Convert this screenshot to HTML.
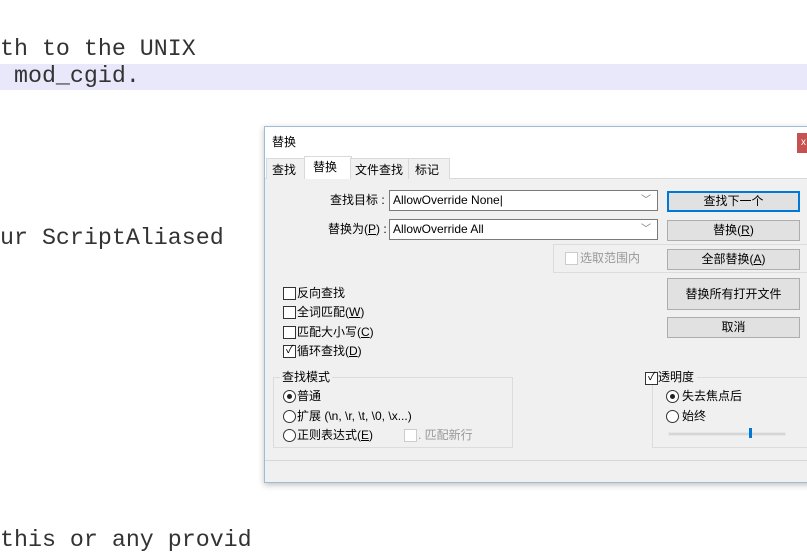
<!DOCTYPE html>
<html><head><meta charset="utf-8"><style>
body{margin:0;width:807px;height:533px;overflow:hidden;background:#fff;position:relative;font-family:"Liberation Sans","Noto Sans CJK SC",sans-serif}
.code{position:absolute;left:0;font-family:"Liberation Mono",monospace;font-size:23.3px;color:#333;white-space:pre;line-height:27px}
.a{position:absolute}
.t{position:absolute;font-size:12px;color:#000;white-space:nowrap;line-height:16px}
.btn{position:absolute;left:667px;width:131px;height:19px;background:#e1e1e1;border:1px solid #adadad;font-size:12px;text-align:center;line-height:19px}
.cb{position:absolute;width:11px;height:11px;border:1px solid #333;background:#fff}
.rb{position:absolute;width:11px;height:11px;border:1px solid #333;border-radius:50%;background:#fff}
.rb.on::after{content:"";position:absolute;left:3px;top:3px;width:5px;height:5px;border-radius:50%;background:#222}
.inp{position:absolute;left:389px;width:264px;height:19px;background:#fff;border:1px solid #7a7a7a;font-size:12px;line-height:19px;padding-left:3px;box-sizing:content-box}
.inp span{position:absolute;right:6px;top:0;color:#777;font-size:10px}
</style></head><body>
<div class="a" style="left:0;top:64px;width:807px;height:26px;background:#e8e8fa"></div>
<div class="code" style="top:36px">th to the UNIX</div>
<div class="code" style="top:63px"> mod_cgid.</div>
<div class="code" style="top:225px">ur ScriptAliased</div>
<div class="code" style="top:527px">this or any provid</div>

<div class="a" style="left:264px;top:126px;width:550px;height:355px;background:#f0f0f0;border:1px solid #9fbcd6;box-shadow:0 2px 6px rgba(0,0,0,.25)"></div>
<div class="a" style="left:265px;top:127px;width:550px;height:30px;background:#fff"></div>
<div class="t" style="left:272px;top:134px">替换</div>
<div class="a" style="left:797px;top:133px;width:12px;height:20px;background:#c75050;color:#fff;font-size:10px;line-height:20px;padding-left:4px">x</div>
<!-- tabs -->
<div class="a" style="left:265px;top:157px;width:550px;height:21px;background:#fff;border-bottom:1px solid #d9d9d9"></div>
<div class="a" style="left:266px;top:158px;width:38px;height:20px;background:#f0f0f0;border:1px solid #d9d9d9;border-bottom:none"></div>
<div class="a" style="left:304px;top:156px;width:46px;height:23px;background:#fff;border:1px solid #d9d9d9;border-bottom:none"></div>
<div class="a" style="left:350px;top:158px;width:58px;height:20px;background:#f0f0f0;border:1px solid #d9d9d9;border-bottom:none"></div>
<div class="a" style="left:408px;top:158px;width:40px;height:20px;background:#f0f0f0;border:1px solid #d9d9d9;border-bottom:none"></div>
<div class="t" style="left:272px;top:162px">查找</div>
<div class="t" style="left:313px;top:159px">替换</div>
<div class="t" style="left:355px;top:162px">文件查找</div>
<div class="t" style="left:415px;top:162px">标记</div>
<div class="a" style="left:265px;top:179px;width:550px;height:281px;background:#f0f0f0"></div>

<div class="t" style="left:330px;top:192px">查找目标 :</div>
<div class="inp" style="top:190px">AllowOverride None|<span>﹀</span></div>
<div class="t" style="left:328px;top:221px">替换为(<u>P</u>) :</div>
<div class="inp" style="top:219px">AllowOverride All<span>﹀</span></div>

<div class="btn" style="top:191px;border:2px solid #0078d7;width:129px;height:17px;line-height:17px">查找下一个</div>
<div class="btn" style="top:220px">替换(<u>R</u>)</div>
<div class="a" style="left:553px;top:244px;width:260px;height:27px;border:1px solid #dcdcdc;border-right:none"></div>
<div class="cb" style="left:565px;top:252px;border-color:#ccc"></div>
<div class="t" style="left:580px;top:250px;color:#999">选取范围内</div>
<div class="btn" style="top:249px">全部替换(<u>A</u>)</div>
<div class="btn" style="top:278px;height:30px;line-height:30px">替换所有打开文件</div>
<div class="btn" style="top:317px">取消</div>

<div class="cb" style="left:283px;top:287px"></div><div class="t" style="left:297px;top:285px">反向查找</div>
<div class="cb" style="left:283px;top:306px"></div><div class="t" style="left:297px;top:304px">全词匹配(<u>W</u>)</div>
<div class="cb" style="left:283px;top:326px"></div><div class="t" style="left:297px;top:324px">匹配大小写(<u>C</u>)</div>
<div class="cb" style="left:283px;top:345px"></div><div class="t" style="left:283px;top:342px;font-size:11px">&nbsp;✓</div><div class="t" style="left:297px;top:343px">循环查找(<u>D</u>)</div>

<div class="a" style="left:273px;top:377px;width:238px;height:69px;border:1px solid #dcdcdc"></div>
<div class="t" style="left:280px;top:369px;background:#f0f0f0;padding:0 2px">查找模式</div>
<div class="rb on" style="left:283px;top:390px"></div><div class="t" style="left:297px;top:388px">普通</div>
<div class="rb" style="left:283px;top:410px"></div><div class="t" style="left:297px;top:408px">扩展 (\n, \r, \t, \0, \x...)</div>
<div class="rb" style="left:283px;top:429px"></div><div class="t" style="left:297px;top:427px">正则表达式(<u>E</u>)</div>
<div class="cb" style="left:404px;top:429px;border-color:#ccc"></div><div class="t" style="left:418px;top:427px;color:#999">. 匹配新行</div>

<div class="a" style="left:652px;top:377px;width:162px;height:69px;border:1px solid #dcdcdc;border-right:none"></div>
<div class="t" style="left:644px;top:369px;background:#f0f0f0;padding:0 3px 0 14px">透明度</div>
<div class="cb" style="left:645px;top:372px"></div><div class="t" style="left:645px;top:369px;font-size:11px">&nbsp;✓</div>
<div class="rb on" style="left:666px;top:390px"></div><div class="t" style="left:682px;top:388px">失去焦点后</div>
<div class="rb" style="left:666px;top:410px"></div><div class="t" style="left:682px;top:408px">始终</div>
<div class="a" style="left:668px;top:432px;width:116px;height:2px;background:#d6d6d6;border:1px solid #e7e7e7"></div>
<div class="a" style="left:749px;top:428px;width:3px;height:10px;background:#0078d7"></div>

<div class="a" style="left:265px;top:460px;width:550px;height:1px;background:#d7d7d7"></div>
</body></html>
